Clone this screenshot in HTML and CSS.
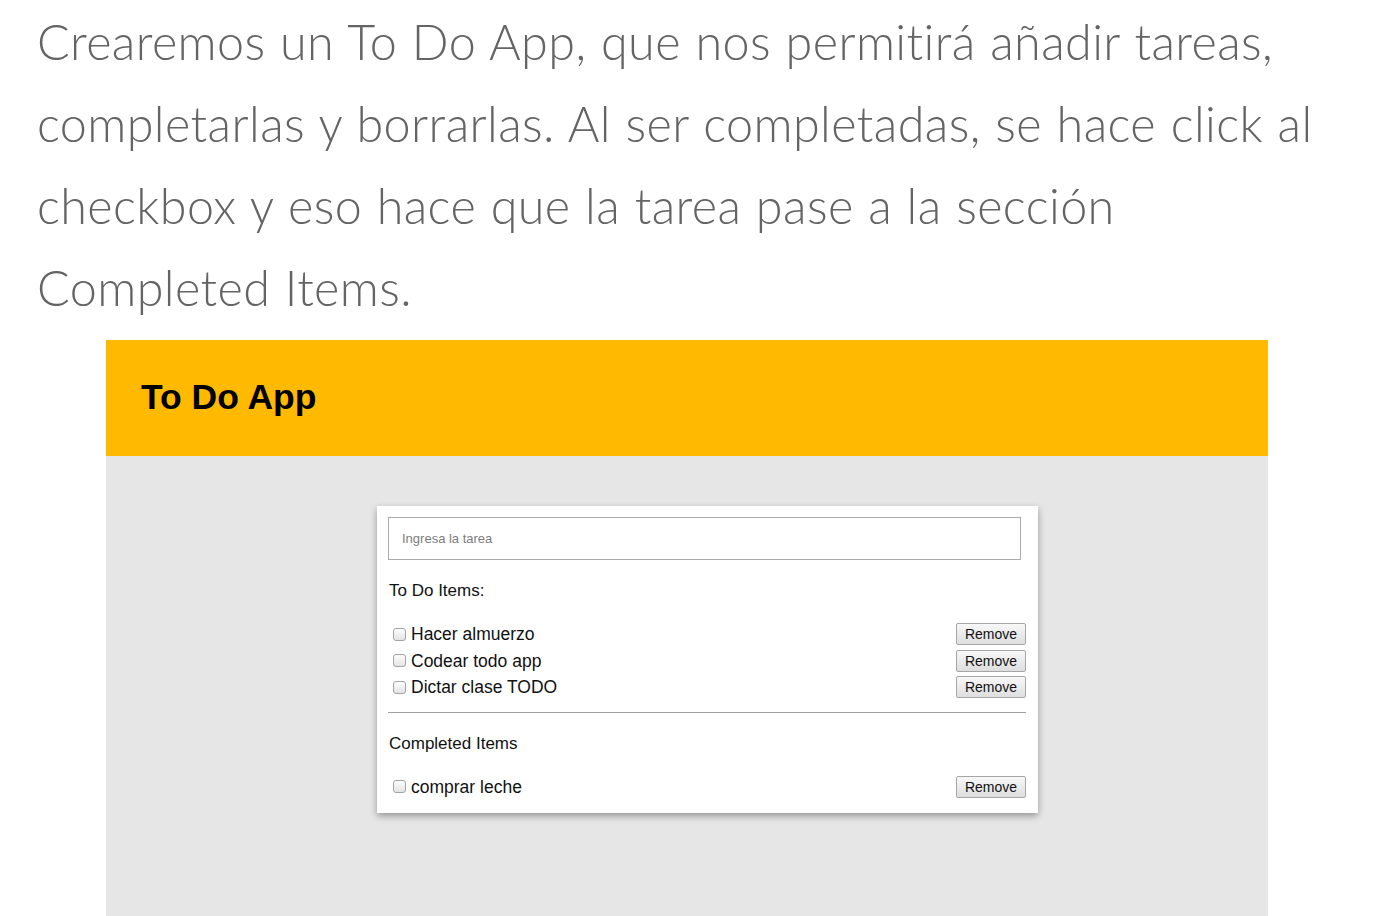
FILE: index.html
```html
<!DOCTYPE html>
<html lang="es">
<head>
<meta charset="utf-8">
<title>To Do App</title>
<link rel="stylesheet" href="styles.css">
</head>
<body>
<p class="intro">
  <span class="line">Crearemos un To Do App, que nos permitirá añadir tareas,</span>
  <span class="line">completarlas y borrarlas. Al ser completadas, se hace click al</span>
  <span class="line">checkbox y eso hace que la tarea pase a la sección</span>
  <span class="line">Completed Items.</span>
</p>
<div class="shot">
  <header class="app-header">
    <h1 class="app-title">To Do App</h1>
  </header>
  <main class="app-body">
    <section class="card">
      <div class="field">Ingresa la tarea</div>
      <h2 class="section-title">To Do Items:</h2>
      <ul class="items">
        <li class="item"><span class="cb"></span><span class="label">Hacer almuerzo</span><span class="btn">Remove</span></li>
        <li class="item"><span class="cb"></span><span class="label">Codear todo app</span><span class="btn">Remove</span></li>
        <li class="item"><span class="cb"></span><span class="label">Dictar clase TODO</span><span class="btn">Remove</span></li>
      </ul>
      <hr class="divider">
      <h2 class="section-title completed">Completed Items</h2>
      <ul class="items">
        <li class="item"><span class="cb"></span><span class="label">comprar leche</span><span class="btn">Remove</span></li>
      </ul>
    </section>
  </main>
</div>
</body>
</html>
```

FILE: styles.css
```css
html, body {
  margin: 0;
  padding: 0;
  background: #ffffff;
}

body {
  width: 1388px;
  height: 916px;
  overflow: hidden;
}

.intro {
  margin: 0 0 12px 0;
  padding-left: 37px;
  font-family: "Lato", "Open Sans", sans-serif;
  font-weight: 300;
  font-size: 48.5px;
  letter-spacing: 0.4px;
  word-spacing: 1px;
  line-height: 82px;
  color: #646464;
}

.line {
  display: block;
  white-space: nowrap;
}

.shot {
  margin-left: 106px;
  width: 1162px;
  display: flex;
  flex-direction: column;
  height: 576px;
}

.app-header {
  background: #ffba00;
  height: 116px;
  box-sizing: border-box;
  padding: 37px 0 0 35px;
}

.app-title {
  margin: 0;
  font-family: "Liberation Sans", Arial, sans-serif;
  font-weight: bold;
  font-size: 35.5px;
  line-height: 40px;
  color: #000;
}

.app-body {
  flex: 1;
  background: #e6e6e6;
  padding-top: 50px;
  padding-left: 271px;
}

.card {
  width: 661px;
  box-sizing: border-box;
  background: #fff;
  padding: 11px 12px 13px 11px;
  box-shadow: 0 3px 7px rgba(0, 0, 0, 0.35);
  font-family: "Liberation Sans", Arial, sans-serif;
  color: #111;
}

.field {
  width: 633px;
  height: 43px;
  box-sizing: border-box;
  border: 1px solid #ababab;
  padding-left: 13px;
  display: flex;
  align-items: center;
  font-size: 13px;
  color: #7d7d7d;
}

.section-title {
  margin: 21px 0 20px 1px;
  font-weight: normal;
  font-size: 17px;
  line-height: 20px;
}

.section-title.completed {
  margin-top: 21px;
}

.items {
  list-style: none;
  margin: 0;
  padding: 0;
}

.item {
  height: 26.5px;
  box-sizing: border-box;
  padding-top: 1px;
  display: flex;
  align-items: center;
  font-size: 17.5px;
}

.cb {
  width: 13px;
  height: 13px;
  box-sizing: border-box;
  margin: -1px 5px 0 5px;
  border: 1px solid #a3a3a3;
  border-radius: 3px;
  background: linear-gradient(#fdfdfd, #e4e4e4);
}

.label {
  flex: 1;
}

.btn {
  width: 70px;
  height: 22px;
  box-sizing: border-box;
  margin-top: -1px;
  border: 1px solid #a6a6a6;
  border-radius: 2px;
  background: linear-gradient(#f8f8f8, #dedede);
  font-size: 14px;
  line-height: 20px;
  text-align: center;
  color: #111;
}

.divider {
  margin: 11px 0 0 0;
  border: 0;
  border-top: 1px solid #a0a0a0;
  height: 0;
}
```
